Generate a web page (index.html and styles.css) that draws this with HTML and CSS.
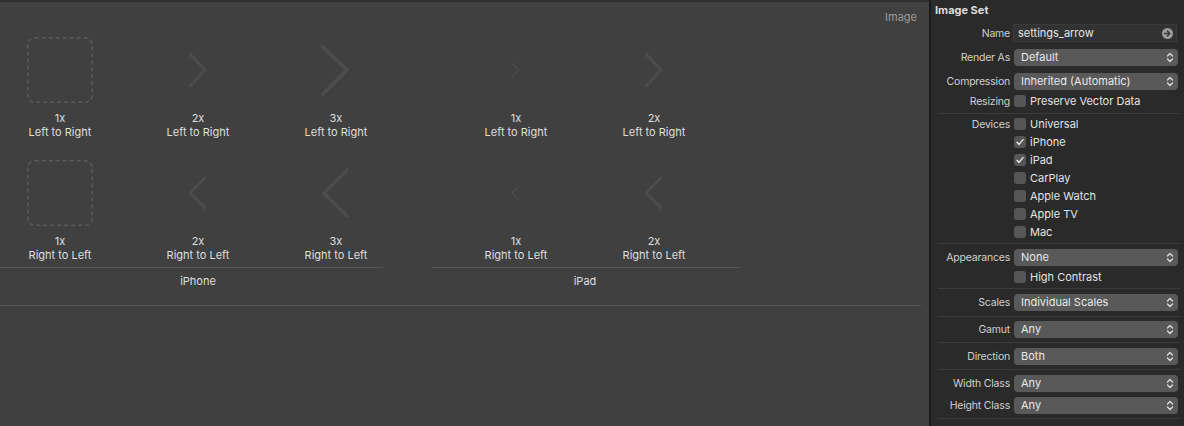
FILE: index.html
```
<!DOCTYPE html>
<html>
<head>
<meta charset="utf-8">
<link rel="stylesheet" href="styles.css">
</head>
<body>
<div class="app">
  <main class="canvas">
    <div class="canvas-head"><span>Image</span></div>
    <div class="groups">
      <section class="group group-iphone">
        <div class="grid">
          <div class="cell">
            <div class="slot"><svg width="66" height="66" viewBox="0 0 66 66"><rect class="dash" x="0.75" y="0.75" width="64.5" height="64.5" rx="7"/></svg></div>
            <div class="cap">1x<br>Left to Right</div>
          </div>
          <div class="cell">
            <div class="slot"><svg width="66" height="66" viewBox="0 0 66 66"><polyline class="chev w2" points="25,17 40,33 25,49"/></svg></div>
            <div class="cap">2x<br>Left to Right</div>
          </div>
          <div class="cell">
            <div class="slot"><svg width="66" height="66" viewBox="0 0 66 66"><polyline class="chev w3" points="20,10 44,33 20,57"/></svg></div>
            <div class="cap">3x<br>Left to Right</div>
          </div>
          <div class="cell">
            <div class="slot"><svg width="66" height="66" viewBox="0 0 66 66"><rect class="dash" x="0.75" y="0.75" width="64.5" height="64.5" rx="7"/></svg></div>
            <div class="cap">1x<br>Right to Left</div>
          </div>
          <div class="cell">
            <div class="slot"><svg width="66" height="66" viewBox="0 0 66 66"><polyline class="chev w2" points="40,18 25,33 40,48"/></svg></div>
            <div class="cap">2x<br>Right to Left</div>
          </div>
          <div class="cell">
            <div class="slot"><svg width="66" height="66" viewBox="0 0 66 66"><polyline class="chev w3" points="44,10 21,33 44,56"/></svg></div>
            <div class="cap">3x<br>Right to Left</div>
          </div>
        </div>
        <div class="rule"></div>
        <div class="gname">iPhone</div>
      </section>
      <section class="group group-ipad">
        <div class="grid">
          <div class="cell">
            <div class="slot"><svg width="66" height="66" viewBox="0 0 66 66"><polyline class="chev w1" points="29,26 36,33 29,40"/></svg></div>
            <div class="cap">1x<br>Left to Right</div>
          </div>
          <div class="cell">
            <div class="slot"><svg width="66" height="66" viewBox="0 0 66 66"><polyline class="chev w2" points="25,17 40,33 25,49"/></svg></div>
            <div class="cap">2x<br>Left to Right</div>
          </div>
          <div class="cell">
            <div class="slot"><svg width="66" height="66" viewBox="0 0 66 66"><polyline class="chev w1" points="36,26 29,33 36,40"/></svg></div>
            <div class="cap">1x<br>Right to Left</div>
          </div>
          <div class="cell">
            <div class="slot"><svg width="66" height="66" viewBox="0 0 66 66"><polyline class="chev w2" points="40,18 25,33 40,48"/></svg></div>
            <div class="cap">2x<br>Right to Left</div>
          </div>
        </div>
        <div class="rule"></div>
        <div class="gname">iPad</div>
      </section>
    </div>
    <div class="bottom-rule"></div>
  </main>
  <div class="divider"></div>
  <aside class="inspector">
    <div class="title">Image Set</div>

    <div class="row m4">
      <span class="lbl">Name</span>
      <div class="field"><span>settings_arrow</span>
        <svg width="11" height="11" viewBox="0 0 11 11"><circle cx="5.5" cy="5.5" r="5.5" fill="#9c9c9c"/><path d="M2.6 5.5h5.2M5.4 3.1L7.8 5.5L5.4 7.9" fill="none" stroke="#3a3a3a" stroke-width="1.4" stroke-linecap="round" stroke-linejoin="round"/></svg>
      </div>
    </div>
    <div class="row m6">
      <span class="lbl">Render As</span>
      <div class="popup"><span>Default</span><svg class="ud" width="8" height="11" viewBox="0 0 8 11"><path d="M1.5 4L4 1.5L6.5 4M1.5 7L4 9.5L6.5 7"/></svg></div>
    </div>
    <div class="row m6">
      <span class="lbl">Compression</span>
      <div class="popup"><span>Inherited (Automatic)</span><svg class="ud" width="8" height="11" viewBox="0 0 8 11"><path d="M1.5 4L4 1.5L6.5 4M1.5 7L4 9.5L6.5 7"/></svg></div>
    </div>
    <div class="row m2">
      <span class="lbl">Resizing</span>
      <div class="check"><span class="box"></span><span>Preserve Vector Data</span></div>
    </div>

    <div class="sep s3"></div>

    <div class="row m1">
      <span class="lbl">Devices</span>
      <div class="check"><span class="box"></span><span>Universal</span></div>
    </div>
    <div class="row">
      <span class="lbl"></span>
      <div class="check"><span class="box"><svg width="12" height="12" viewBox="0 0 12 12"><path d="M3 6.3L5 8.4L9 3.6"/></svg></span><span>iPhone</span></div>
    </div>
    <div class="row">
      <span class="lbl"></span>
      <div class="check"><span class="box"><svg width="12" height="12" viewBox="0 0 12 12"><path d="M3 6.3L5 8.4L9 3.6"/></svg></span><span>iPad</span></div>
    </div>
    <div class="row">
      <span class="lbl"></span>
      <div class="check"><span class="box"></span><span>CarPlay</span></div>
    </div>
    <div class="row">
      <span class="lbl"></span>
      <div class="check"><span class="box"></span><span>Apple Watch</span></div>
    </div>
    <div class="row">
      <span class="lbl"></span>
      <div class="check"><span class="box"></span><span>Apple TV</span></div>
    </div>
    <div class="row">
      <span class="lbl"></span>
      <div class="check"><span class="box"></span><span>Mac</span></div>
    </div>

    <div class="sep s2"></div>

    <div class="row m4">
      <span class="lbl">Appearances</span>
      <div class="popup"><span>None</span><svg class="ud" width="8" height="11" viewBox="0 0 8 11"><path d="M1.5 4L4 1.5L6.5 4M1.5 7L4 9.5L6.5 7"/></svg></div>
    </div>
    <div class="row m2">
      <span class="lbl"></span>
      <div class="check"><span class="box"></span><span>High Contrast</span></div>
    </div>

    <div class="sep s2"></div>

    <div class="row m4">
      <span class="lbl">Scales</span>
      <div class="popup"><span>Individual Scales</span><svg class="ud" width="8" height="11" viewBox="0 0 8 11"><path d="M1.5 4L4 1.5L6.5 4M1.5 7L4 9.5L6.5 7"/></svg></div>
    </div>

    <div class="sep s5"></div>

    <div class="row m3">
      <span class="lbl">Gamut</span>
      <div class="popup"><span>Any</span><svg class="ud" width="8" height="11" viewBox="0 0 8 11"><path d="M1.5 4L4 1.5L6.5 4M1.5 7L4 9.5L6.5 7"/></svg></div>
    </div>

    <div class="sep s4"></div>

    <div class="row m4">
      <span class="lbl">Direction</span>
      <div class="popup"><span>Both</span><svg class="ud" width="8" height="11" viewBox="0 0 8 11"><path d="M1.5 4L4 1.5L6.5 4M1.5 7L4 9.5L6.5 7"/></svg></div>
    </div>

    <div class="sep s4"></div>

    <div class="row m4">
      <span class="lbl">Width Class</span>
      <div class="popup"><span>Any</span><svg class="ud" width="8" height="11" viewBox="0 0 8 11"><path d="M1.5 4L4 1.5L6.5 4M1.5 7L4 9.5L6.5 7"/></svg></div>
    </div>
    <div class="row m4">
      <span class="lbl">Height Class</span>
      <div class="popup"><span>Any</span><svg class="ud" width="8" height="11" viewBox="0 0 8 11"><path d="M1.5 4L4 1.5L6.5 4M1.5 7L4 9.5L6.5 7"/></svg></div>
    </div>

    <div class="sep s4"></div>

    <div class="row m4">
      <span class="lbl"></span>
      <div class="check"><span class="box"></span><span></span></div>
    </div>
  </aside>
</div>
</body>
</html>
```

FILE: styles.css
```
* { box-sizing: border-box; }

html, body {
  margin: 0;
  padding: 0;
  height: 100%;
  overflow: hidden;
}

body {
  font-family: "Inter", "Liberation Sans", sans-serif;
  font-size: 11px;
  background: #404040;
  color: #dcdcdc;
}

.app {
  display: flex;
  height: 426px;
}

/* ---------- canvas ---------- */
.canvas {
  flex: 0 0 929px;
  background: #404040;
  border-top: 2px solid #303030;
  display: flex;
  flex-direction: column;
}

.canvas-head {
  display: flex;
  justify-content: flex-end;
  padding: 8px 12px 0 0;
  height: 22px;
  line-height: 14px;
  color: #9a9a9a;
}

.groups {
  display: flex;
  gap: 60px;
  margin-top: 13px;
}

.group {
  display: flex;
  flex-direction: column;
}

.grid {
  display: grid;
  grid-template-columns: repeat(3, 120px);
  column-gap: 18px;
  row-gap: 21px;
}

.group-ipad .grid {
  grid-template-columns: repeat(2, 120px);
}

.cell {
  display: flex;
  flex-direction: column;
  align-items: center;
}

.slot {
  width: 66px;
  height: 66px;
}

.slot svg { display: block; }

.dash {
  fill: none;
  stroke: #5b5b5b;
  stroke-width: 1.5;
  stroke-dasharray: 4 3;
}

.chev {
  fill: none;
  stroke: #4d4d4d;
  stroke-linecap: round;
  stroke-linejoin: round;
}
.chev.w1 { stroke-width: 1.4; stroke: #4b4b4b; }
.chev.w2 { stroke-width: 2.6; }
.chev.w3 { stroke-width: 3.6; }

.cap {
  margin-top: 8px;
  text-align: center;
  line-height: 14px;
  color: #dedede;
}

.rule {
  height: 1px;
  background: #575757;
  margin-top: 5px;
}

.group-iphone .rule { margin-right: 13px; }
.group-ipad .rule { margin-left: -24px; margin-right: -26px; }

.gname {
  text-align: center;
  line-height: 14px;
  margin-top: 6px;
  color: #dedede;
}

.bottom-rule {
  height: 1px;
  background: #575757;
  margin: 17px 8px 0 0;
}

.divider {
  flex: 0 0 2px;
  background: #1b1b1b;
}

/* ---------- inspector ---------- */
.inspector {
  flex: 1;
  background: #2a2a2a;
  display: flex;
  flex-direction: column;
  overflow: hidden;
}

.title {
  height: 20px;
  line-height: 20px;
  padding-left: 4px;
  font-weight: 700;
  color: #dcdcdc;
}

.row {
  display: flex;
  align-items: center;
  height: 18px;
  margin-top: 0;
  flex: 0 0 auto;
}

.row.m1 { margin-top: 1px; }
.row.m2 { margin-top: 2px; }
.row.m3 { margin-top: 3px; }
.row.m4 { margin-top: 4px; }
.row.m6 { margin-top: 6px; }

.lbl {
  flex: 0 0 79px;
  text-align: right;
  color: #cfcfcf;
  font-size: 10.5px;
  letter-spacing: -0.2px;
}

.field {
  margin-left: 3px;
  width: 164px;
  height: 18px;
  background: #323232;
  border: 1px solid #3a3a3a;
  display: flex;
  align-items: center;
  justify-content: space-between;
  padding: 0 3px 0 4px;
  color: #e4e4e4;
}

.field svg { display: block; }

.popup {
  margin-left: 4px;
  width: 164px;
  height: 17px;
  background: #595959;
  border-radius: 4px;
  display: flex;
  align-items: center;
  justify-content: space-between;
  padding: 0 4px 0 7px;
  color: #e8e8e8;
}

.ud {
  display: block;
}
.ud path {
  fill: none;
  stroke: #e0e0e0;
  stroke-width: 1.3;
  stroke-linecap: round;
  stroke-linejoin: round;
}

.check {
  margin-left: 4px;
  display: flex;
  align-items: center;
  gap: 4px;
  color: #e2e2e2;
}

.box {
  width: 12px;
  height: 12px;
  border-radius: 3px;
  background: #565656;
  display: block;
}

.box svg { display: block; }
.box path {
  fill: none;
  stroke: #e8e8e8;
  stroke-width: 1.4;
  stroke-linecap: round;
  stroke-linejoin: round;
}

.sep {
  height: 1px;
  background: #3b3b3b;
  margin: 2px 4px 0 7px;
  flex: 0 0 1px;
}

.sep.s2 { margin-top: 2px; }
.sep.s3 { margin-top: 3px; }
.sep.s4 { margin-top: 4px; }
.sep.s5 { margin-top: 5px; }
```
